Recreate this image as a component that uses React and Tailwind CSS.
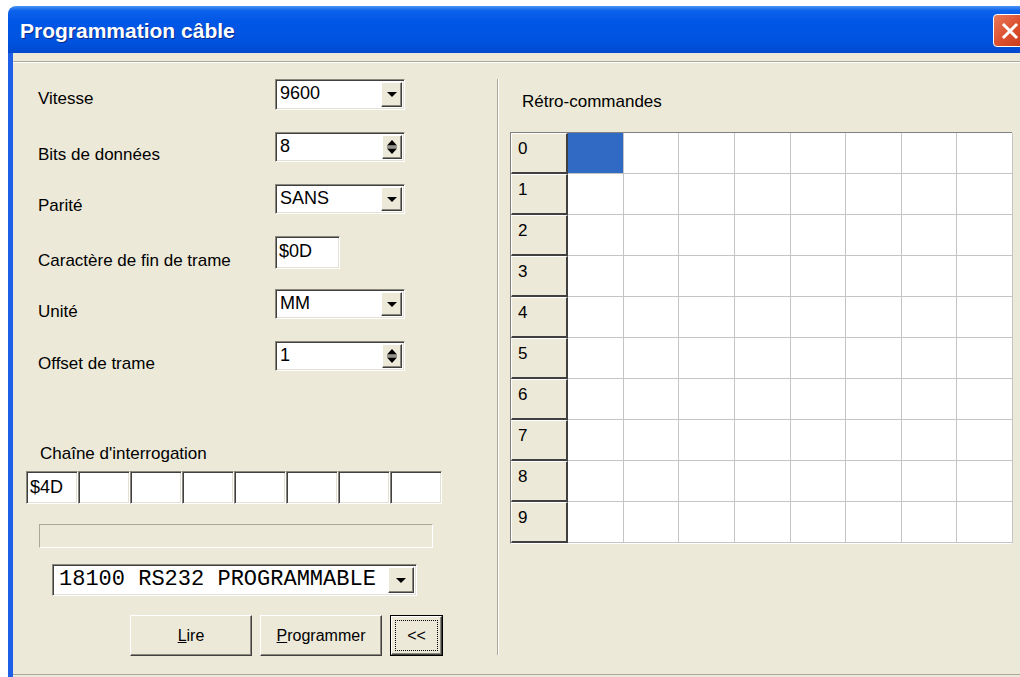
import React from "react";

const ui = { fontFamily: '"Liberation Sans", Arial, sans-serif' };
const mono = { fontFamily: '"Liberation Mono", "Courier New", monospace' };

const sunken =
  "border border-t-[#8a877c] border-l-[#8a877c] border-b-white border-r-white shadow-[inset_1px_1px_0_#404040,inset_-1px_-1px_0_#e4e1d4]";
const raised =
  "border border-t-white border-l-white border-b-[#404040] border-r-[#404040] shadow-[inset_-1px_-1px_0_#8a877c]";

function ArrowDown() {
  return (
    <svg width="10" height="5" viewBox="0 0 10 5">
      <path d="M0 0h10L5 5z" fill="#000" />
    </svg>
  );
}

function Combo({ value, height = "h-[31px]" }) {
  return (
    <div className={`${sunken} w-[130px] ${height} bg-white flex items-stretch p-[2px]`}>
      <div className="flex-1 pl-[2px] pt-[1px] text-[18px] leading-[20px] text-black">{value}</div>
      <div className={`${raised} w-[21px] bg-[#ece9d8] flex items-center justify-center`}>
        <ArrowDown />
      </div>
    </div>
  );
}

function Spin({ value }) {
  return (
    <div className={`${sunken} w-[130px] h-[30px] bg-white flex items-stretch p-[2px]`}>
      <div className="flex-1 pl-[2px] pt-[1px] text-[18px] leading-[20px] text-black">{value}</div>
      <div className={`${raised} w-[20px] bg-[#ece9d8] flex items-center justify-center`}>
        <svg width="10" height="18" viewBox="0 0 10 18">
          <path d="M5 2L10 7.5H0z" fill="#000" />
          <path d="M0 9h10" stroke="#404040" strokeWidth="1" />
          <path d="M0 10.5h10L5 16z" fill="#000" />
        </svg>
      </div>
    </div>
  );
}

function Field({ label, children, h, pt = "pt-[12px]" }) {
  return (
    <div className={`flex ${h}`}>
      <div className={`w-[237px] ${pt} text-[17px] leading-[20px] text-black`}>{label}</div>
      <div>{children}</div>
    </div>
  );
}

function Button({ children, w, focused }) {
  if (focused) {
    return (
      <div className={`${w} h-[41px] border border-black`}>
        <div className={`${raised} h-full bg-[#ece9d8] flex items-center justify-center p-[3px]`}>
          <div className="w-full h-full border border-dotted border-black flex items-center justify-center text-[16px]">
            {children}
          </div>
        </div>
      </div>
    );
  }
  return (
    <div className={`${raised} ${w} h-[41px] bg-[#ece9d8] flex items-center justify-center text-[16px] text-black`}>
      {children}
    </div>
  );
}

const rows = [0, 1, 2, 3, 4, 5, 6, 7, 8, 9];
const cols = [0, 1, 2, 3, 4, 5, 6, 7];

export default function App() {
  return (
    <div className="w-[1020px] h-[677px] bg-white overflow-hidden pt-[6px] pl-[8px]" style={ui}>
      <div className="w-[1022px] h-[671px] flex flex-col">
        {/* title bar */}
        <div className="h-[47px] shrink-0 rounded-tl-[8px] bg-[linear-gradient(to_bottom,#4a93f6_0%,#0c62ea_10%,#0056e5_35%,#0053e0_75%,#0149cf_100%)] flex items-center pl-[12px]">
          <div className="flex-1 text-white font-bold text-[21px] [text-shadow:1px_1px_0_#0a2a8a] pt-[3px]">
            Programmation câble
          </div>
          <div className="w-[34px] h-[33px] mr-[3px] mt-[2px] rounded-[4px] border border-white bg-[linear-gradient(135deg,#ea7a5b_0%,#dc5030_50%,#c83a1a_100%)] flex items-center justify-center">
            <svg width="18" height="18" viewBox="0 0 18 18">
              <path d="M3 3l12 12M15 3L3 15" stroke="#fff" strokeWidth="3" strokeLinecap="square" />
            </svg>
          </div>
        </div>

        {/* window body */}
        <div className="flex-1 flex flex-col bg-[#ece9d8] border-l-[5px] border-l-[#1d5fe6]">
          <div className="h-[8px]" />
          <div className="border-t border-[#aca899]" />
          <div className="border-t border-white" />

          <div className="flex-1 flex">
            {/* left panel */}
            <div className="w-[484px] shrink-0 flex flex-col pt-[16px]">
              <div className="pl-[25px]">
                <Field label="Vitesse" h="h-[53px]" pt="pt-[10px]">
                  <Combo value="9600" />
                </Field>
                <Field label="Bits de données" h="h-[52px]" pt="pt-[13px]">
                  <Spin value="8" />
                </Field>
                <Field label="Parité" h="h-[52px]">
                  <Combo value="SANS" height="h-[30px]" />
                </Field>
                <Field label="Caractère de fin de trame" h="h-[53px]" pt="pt-[15px]">
                  <div className={`${sunken} w-[65px] h-[33px] bg-white pl-[3px] pt-[4px] text-[18px] leading-[20px]`}>
                    $0D
                  </div>
                </Field>
                <Field label="Unité" h="h-[52px]" pt="pt-[13px]">
                  <Combo value="MM" height="h-[30px]" />
                </Field>
                <Field label="Offset de trame" h="h-[52px]" pt="pt-[13px]">
                  <Spin value="1" />
                </Field>
              </div>

              <div className="mt-[51px] pl-[27px] text-[17px] leading-[20px] text-black">Chaîne d'interrogation</div>
              <div className="mt-[7px] ml-[13px] flex">
                {cols.map((c) => (
                  <div key={c} className={`${sunken} w-[52px] h-[33px] bg-white pl-[3px] pt-[5px] text-[18px] leading-[20px]`}>
                    {c === 0 ? "$4D" : ""}
                  </div>
                ))}
              </div>

              <div className="mt-[20px] ml-[26px] w-[394px] h-[24px] border border-t-[#aca899] border-l-[#aca899] border-b-white border-r-white" />

              <div className="mt-[16px] ml-[39px]">
                <div className={`${sunken} w-[365px] h-[32px] bg-white flex items-stretch p-[2px]`}>
                  <div className="flex-1 pl-[4px] text-[22px] leading-[26px] text-black" style={mono}>
                    18100 RS232 PROGRAMMABLE
                  </div>
                  <div className={`${raised} w-[26px] bg-[#ece9d8] flex items-center justify-center`}>
                    <ArrowDown />
                  </div>
                </div>
              </div>

              <div className="mt-[19px] ml-[117px] flex gap-[8px]">
                <Button w="w-[122px]">
                  <span><span className="underline">L</span>ire</span>
                </Button>
                <Button w="w-[122px]">
                  <span><span className="underline">P</span>rogrammer</span>
                </Button>
                <Button w="w-[53px]" focused>
                  {"<<"}
                </Button>
              </div>
            </div>

            {/* separator */}
            <div className="mt-[16px] mb-[18px] border-l border-[#aca899]" />
            <div className="mt-[16px] mb-[18px] border-l border-white" />

            {/* right panel */}
            <div className="flex-1 flex flex-col pt-[29px] pl-[11px]">
              <div className="pl-[12px] text-[17px] leading-[20px] text-black">Rétro-commandes</div>
              <div className="mt-[20px] w-[502px] border-l border-t border-[#808080] border-b border-b-white grid grid-cols-[57px_repeat(8,55.625px)] bg-white">
                {rows.map((r) => (
                  <React.Fragment key={r}>
                    <div className="h-[41px] bg-[#ece9d8] border-t border-l border-white border-b-2 border-r-2 border-b-[#404040] border-r-[#404040] pl-[6px] pt-[5px] text-[17px] leading-[20px] text-black">
                      {r}
                    </div>
                    {cols.map((c) => (
                      <div
                        key={c}
                        className={`h-[41px] border-r border-b border-[#c4c4c4] ${r === 0 && c === 0 ? "bg-[#316ac5]" : "bg-white"}`}
                      />
                    ))}
                  </React.Fragment>
                ))}
              </div>
            </div>
          </div>

          <div className="h-[2px] border-b border-[#aca899]" />
          <div className="h-[2px]" />
        </div>
      </div>
    </div>
  );
}
